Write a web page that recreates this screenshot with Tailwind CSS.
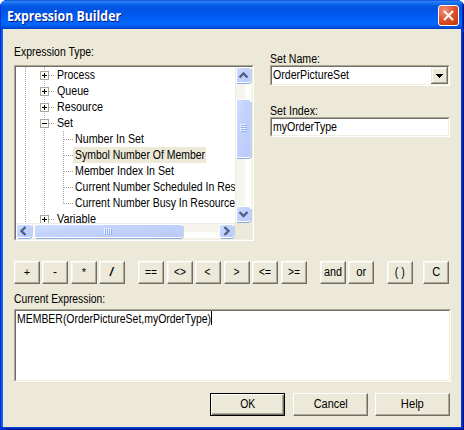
<!DOCTYPE html>
<html lang="en">
<head>
<meta charset="utf-8">
<title>Expression Builder</title>
<script src="https://cdn.jsdelivr.net/npm/@tailwindcss/browser@4"></script>
</head>
<body class="bg-white overflow-hidden">
<svg class="absolute w-0 h-0">
  <defs>
    <linearGradient id="face" x1="0" y1="0" x2="1" y2="1"><stop offset="0" stop-color="#d2e0ff"/><stop offset=".35" stop-color="#c3d3fd"/><stop offset="1" stop-color="#b9cbfa"/></linearGradient>
  </defs>
  <symbol id="plus" viewBox="0 0 9 9"><path fill="#fff" stroke="#aca899" d="M.5.5h8v8h-8z"/><path fill="none" stroke="#000" d="M2 4.5h5M4.5 2v5"/></symbol>
  <symbol id="minus" viewBox="0 0 9 9"><path fill="#fff" stroke="#aca899" d="M.5.5h8v8h-8z"/><path fill="none" stroke="#000" d="M2 4.5h5"/></symbol>
</svg>
<div class="w-[464px] h-[430px] flex flex-col rounded-t-[7px] overflow-hidden bg-[#0831d9] font-['Liberation_Sans',Arial,sans-serif] text-[12px] leading-[16px] text-black">
  <header class="relative h-[29px] shrink-0 flex items-start justify-between pl-[7px] pr-[5px] pt-[5px] bg-[linear-gradient(180deg,#0831d9_0,#2a83f5_1px,#1a72ee_3px,#0557e3_6px,#0054e3_10px,#005bf0_16px,#0267fd_22px,#0264f8_25px,#0049d0_28px,#0040c8_29px)] shadow-[inset_1px_0_#0831d9,inset_-1px_0_#00138c,inset_-2px_0_#0029b4]">
    <h1 class="font-['Open_Sans','Noto_Sans',sans-serif] font-bold text-[14px] leading-[22px] text-white [text-shadow:1px_1px_0_#0a1883]"><span data-w="114" class="inline-block whitespace-nowrap origin-left">Expression Builder</span></h1>
    <svg width="21" height="21" viewBox="0 0 21 21">
      <defs><radialGradient id="red" cx=".3" cy=".25" r=".9"><stop offset="0" stop-color="#ee9377"/><stop offset=".5" stop-color="#e2552e"/><stop offset="1" stop-color="#c63a0c"/></radialGradient></defs>
      <rect x=".5" y=".5" width="20" height="20" rx="2.5" fill="url(#red)" stroke="#fff"/>
      <path d="M6 6l9 9M15 6l-9 9" stroke="#fff" stroke-width="2.1"/>
    </svg>
  </header>
  <main class="h-[398px] mx-[3px] mb-[3px] bg-[#ece9d8] pl-[11px] pr-[10px] flex flex-col shadow-[1px_1px_0_#0441d8,2px_2px_0_#0029b4,3px_3px_0_#00138c,-1px_0_0_#166aee,-2px_0_0_#0855dd]">
    <section class="flex pt-[15px] h-[232px] shrink-0">
      <div class="w-[240px] shrink-0">
        <div class="h-[21px]"><span data-w="80" class="inline-block whitespace-nowrap origin-left">Expression Type:</span></div>
        <div class="h-[176px] border border-t-[#aca899] border-l-[#aca899] border-r-white border-b-white">
          <div class="h-[174px] border border-t-[#716f64] border-l-[#716f64] border-r-[#f1efe2] border-b-[#f1efe2] grid grid-cols-[219px_17px] grid-rows-[156px_16px]">
            <div class="bg-white overflow-hidden relative">
              <svg class="absolute left-0 top-0" width="219" height="156" shape-rendering="crispEdges" stroke="#aca899" stroke-dasharray="1 1" fill="none">
                <path d="M9.5 0V156M28.5 0V156M47.5 64V137M33 8.5h6M33 24.5h6M33 40.5h6M33 56.5h6M33 152.5h6M48 72.5h9M48 88.5h9M48 104.5h9M48 120.5h9M48 136.5h9"/>
              </svg>
              <ul class="relative">
                <li class="h-4 flex pl-6"><svg class="w-[9px] h-[9px] mt-1 mr-2 shrink-0" shape-rendering="crispEdges"><use href="#plus"/></svg><span data-w="38" class="inline-block whitespace-nowrap origin-left">Process</span></li>
                <li class="h-4 flex pl-6"><svg class="w-[9px] h-[9px] mt-1 mr-2 shrink-0" shape-rendering="crispEdges"><use href="#plus"/></svg><span data-w="32" class="inline-block whitespace-nowrap origin-left">Queue</span></li>
                <li class="h-4 flex pl-6"><svg class="w-[9px] h-[9px] mt-1 mr-2 shrink-0" shape-rendering="crispEdges"><use href="#plus"/></svg><span data-w="46" class="inline-block whitespace-nowrap origin-left">Resource</span></li>
                <li class="h-4 flex pl-6"><svg class="w-[9px] h-[9px] mt-1 mr-2 shrink-0" shape-rendering="crispEdges"><use href="#minus"/></svg><span data-w="16" class="inline-block whitespace-nowrap origin-left">Set</span></li>
                <li class="h-4 flex pl-[59px]"><span data-w="69" class="inline-block whitespace-nowrap origin-left">Number In Set</span></li>
                <li class="h-4 ml-[57px] w-[133px] pl-[2px] flex bg-[#ece9d8]"><span data-w="130" class="inline-block whitespace-nowrap origin-left">Symbol Number Of Member</span></li>
                <li class="h-4 flex pl-[59px]"><span data-w="99" class="inline-block whitespace-nowrap origin-left">Member Index In Set</span></li>
                <li class="h-4 flex pl-[59px]"><span data-w="187" class="inline-block whitespace-nowrap origin-left">Current Number Scheduled In Resource</span></li>
                <li class="h-4 flex pl-[59px]"><span data-w="160" class="inline-block whitespace-nowrap origin-left">Current Number Busy In Resource</span></li>
                <li class="h-4 flex pl-6"><svg class="w-[9px] h-[9px] mt-1 mr-2 shrink-0" shape-rendering="crispEdges"><use href="#plus"/></svg><span data-w="39" class="inline-block whitespace-nowrap origin-left">Variable</span></li>
              </ul>
            </div>
            <svg width="17" height="156" viewBox="0 0 17 156">
              <path fill="#f5f4ef" d="M0 0h17v156H0z"/><path fill="#eeede5" d="M0 0h1v156H0z"/><path fill="#fefefb" d="M10 0h6v156h-6z"/>
              <g fill="url(#face)" stroke="#fff"><rect x="1.5" y=".5" width="14" height="15" rx="2"/><rect x="1.5" y="32.5" width="14" height="58" rx="2"/><rect x="1.5" y="139.500" width="14" height="15" rx="2"/></g>
              <path fill="none" stroke="#8eaadf" d="M2 16.500h12q2 0 2-2V2M2 91.500h12q2 0 2-2V35M2 155.500h12q2 0 2-2V142"/>
              <path fill="none" stroke="#4d6185" stroke-width="2.4" d="M4.500 10.500l4-4 4 4M4.500 145l4 4 4-4"/>
              <path stroke="#eef4fe" d="M5 57.500h6M5 59.500h6M5 61.500h6M5 63.500h6"/><path stroke="#8cb0f8" d="M6 58.500h6M6 60.500h6M6 62.500h6M6 64.500h6"/>
            </svg>
            <svg width="219" height="16" viewBox="0 0 219 16">
              <path fill="#f5f4ef" d="M0 0h219v16H0z"/><path fill="#eeede5" d="M0 0h219v1H0z"/><path fill="#fefefb" d="M0 9h219v6H0z"/>
              <g fill="url(#face)" stroke="#fff"><rect x=".5" y="1.500" width="15" height="13" rx="2"/><rect x="18.500" y="1.500" width="148" height="13" rx="2"/><rect x="203.500" y="1.500" width="14" height="13" rx="2"/></g>
              <path fill="none" stroke="#8eaadf" d="M2 15.500h12q2 0 2-2V3M20 15.500h145q2 0 2-2V3M205 15.500h11q2 0 2-2V3"/>
              <path fill="none" stroke="#4d6185" stroke-width="2.400" d="M9.500 4l-4 4 4 4M208.500 4l4 4-4 4"/>
              <path stroke="#eef4fe" d="M88.500 5v6M90.500 5v6M92.500 5v6M94.500 5v6"/><path stroke="#8cb0f8" d="M89.500 6v6M91.500 6v6M93.500 6v6M95.500 6v6"/>
            </svg>
            <div class="bg-[#ece9d8]"></div>
          </div>
        </div>
      </div>
      <div class="ml-4 mt-[7px] w-[180px] shrink-0">
        <div class="h-[14px]"><span data-w="50" class="inline-block whitespace-nowrap origin-left">Set Name:</span></div>
        <div class="h-[21px] border border-t-[#aca899] border-l-[#aca899] border-r-white border-b-white">
          <div class="h-[19px] bg-white border border-t-[#716f64] border-l-[#716f64] border-r-[#f1efe2] border-b-[#f1efe2] flex justify-between pl-[1px]">
            <span data-w="76" class="inline-block whitespace-nowrap origin-left">OrderPictureSet</span>
            <svg class="shrink-0" width="17" height="17" shape-rendering="crispEdges"><path fill="#716f64" d="M0 0h17v17H0z"/><path fill="#ece9d8" d="M0 0h16v16H0z"/><path fill="#aca899" d="M1 1h15v15H1z"/><path fill="#fff" d="M1 1h14v14H1z"/><path fill="#ece9d8" d="M2 2h13v13H2z"/><path fill="#000" d="M5 7h7v1H5zM6 8h5v1H6zM7 9h3v1H7zM8 10h1v1H8z"/></svg>
          </div>
        </div>
        <div class="mt-[17px] h-[14px]"><span data-w="48" class="inline-block whitespace-nowrap origin-left">Set Index:</span></div>
        <div class="h-5 border border-t-[#aca899] border-l-[#aca899] border-r-white border-b-white">
          <div class="h-[18px] bg-white border border-t-[#716f64] border-l-[#716f64] border-r-[#f1efe2] border-b-[#f1efe2] pl-[1px]"><span data-w="64" class="inline-block whitespace-nowrap origin-left">myOrderType</span></div>
        </div>
      </div>
    </section>
    <div class="flex h-[23px] shrink-0 [&>button]:w-[26px] [&>button]:h-[23px] [&>button]:pb-[1px] [&>button]:border [&>button]:border-t-white [&>button]:border-l-white [&>button]:border-r-[#716f64] [&>button]:border-b-[#716f64] [&>button]:shadow-[inset_-1px_-1px_#aca899,inset_1px_1px_#f6f4ea]">
      <button><span class="text-[11px]">+</span></button><button class="ml-[2px]">-</button><button class="ml-[3px]"><span class="text-[11px]">*</span></button><button class="ml-[2px]"><span data-w="5" class="inline-block origin-center">/</span></button>
      <button class="ml-[13px]"><span data-w="12" class="inline-block origin-center">==</span></button><button class="ml-[3px]"><span data-w="12" class="inline-block origin-center">&lt;&gt;</span></button><button class="ml-[2px]"><span data-w="6" class="inline-block origin-center">&lt;</span></button><button class="ml-[3px]"><span data-w="6" class="inline-block origin-center">&gt;</span></button><button class="ml-[2px]"><span data-w="12" class="inline-block origin-center">&lt;=</span></button><button class="ml-[3px]"><span data-w="12" class="inline-block origin-center">&gt;=</span></button>
      <button class="ml-[13px]"><span data-w="18" class="inline-block origin-center">and</span></button><button class="ml-[2px]"><span data-w="10" class="inline-block origin-center">or</span></button>
      <button class="ml-[13px]"><span data-w="10" class="inline-block whitespace-nowrap origin-center">( )</span></button><button class="ml-[10px]"><span data-w="8" class="inline-block origin-center">C</span></button>
    </div>
    <div class="mt-[7px] h-[18px] shrink-0"><span data-w="91" class="inline-block whitespace-nowrap origin-left">Current Expression:</span></div>
    <div class="h-[73px] w-[437px] shrink-0 border border-t-[#aca899] border-l-[#aca899] border-r-white border-b-white">
      <div class="h-[71px] bg-white border border-t-[#716f64] border-l-[#716f64] border-r-[#f1efe2] border-b-[#f1efe2] pl-[1px] flex items-start">
        <div class="w-[195px] h-[14px] border-r border-black"><span data-w="194" class="inline-block whitespace-nowrap origin-left">MEMBER(OrderPictureSet,myOrderType)</span></div>
      </div>
    </div>
    <div class="mt-[11px] h-[23px] flex ml-[196px]">
      <button class="w-[75px] h-[23px] pb-[1px] border border-black shadow-[inset_1px_1px_#fff,inset_-1px_-1px_#716f64,inset_-2px_-2px_#aca899]"><span data-w="15" class="inline-block origin-center">OK</span></button>
      <button class="ml-2 w-[75px] h-[23px] pb-[1px] border border-t-white border-l-white border-r-[#716f64] border-b-[#716f64] shadow-[inset_-1px_-1px_#aca899]"><span data-w="34" class="inline-block origin-center">Cancel</span></button>
      <button class="ml-[7px] w-[75px] h-[23px] pb-[1px] border border-t-white border-l-white border-r-[#716f64] border-b-[#716f64] shadow-[inset_-1px_-1px_#aca899]"><span data-w="23" class="inline-block origin-center">Help</span></button>
    </div>
  </main>
</div>
<script>
  // Fit each caption to its intended width in pixels, again whenever its natural size changes.
  const fit = el => {
    el.style.transform = 'none';
    el.style.transform = 'scaleX(' + el.dataset.w / el.getBoundingClientRect().width + ')';
  };
  const watcher = new ResizeObserver(entries => entries.forEach(e => fit(e.target)));
  document.querySelectorAll('[data-w]').forEach(el => { fit(el); watcher.observe(el); });
  window.addEventListener('load', () => document.querySelectorAll('[data-w]').forEach(fit));
</script>
</body>
</html>
